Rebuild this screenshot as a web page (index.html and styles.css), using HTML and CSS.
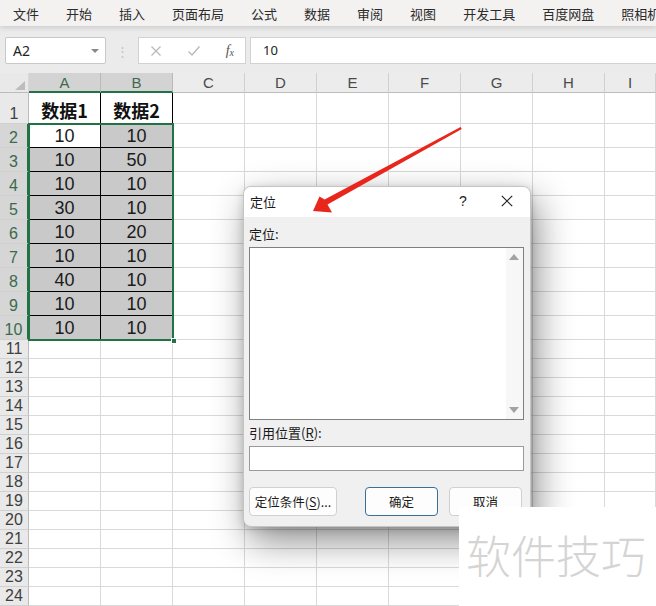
FILE: index.html
```html
<!DOCTYPE html>
<html lang="zh">
<head>
<meta charset="utf-8">
<link rel="stylesheet" href="styles.css">
</head>
<body>
<div class="menu">
  <span>文件</span><span>开始</span><span>插入</span><span>页面布局</span><span>公式</span><span>数据</span><span>审阅</span><span>视图</span><span>开发工具</span><span>百度网盘</span><span>照相机</span>
</div>
<div class="fbar">
  <div class="namebox"><span>A2</span><span class="nb-arrow"></span></div>
  <div class="dots">⋮</div>
  <div class="fxgroup">
    <svg class="ico" width="12" height="12" viewBox="0 0 12 12"><path d="M1.5 1.5L10.5 10.5M10.5 1.5L1.5 10.5" stroke="#b9b9b9" stroke-width="1.3" fill="none"/></svg>
    <svg class="ico" width="14" height="12" viewBox="0 0 14 12"><path d="M1.5 6.5L5 10L12.5 1.5" stroke="#b9b9b9" stroke-width="1.4" fill="none"/></svg>
    <span class="fx">f<sub>x</sub></span>
  </div>
  <div class="finput">10</div>
</div>
<div class="sheet">
  <div class="corner"><span class="tri"></span></div>
  <div class="ch sel">A</div><div class="ch sel">B</div><div class="ch">C</div><div class="ch">D</div><div class="ch">E</div><div class="ch">F</div><div class="ch">G</div><div class="ch">H</div><div class="ch">I</div>

  <div class="rh">1</div><div class="hd">数据1</div><div class="hd">数据2</div><div class="c"></div><div class="c"></div><div class="c"></div><div class="c"></div><div class="c"></div><div class="c"></div><div class="c"></div>

  <div class="rh sel">2</div><div class="d act">10</div><div class="d">10</div><div class="c"></div><div class="c"></div><div class="c"></div><div class="c"></div><div class="c"></div><div class="c"></div><div class="c"></div>
  <div class="rh sel">3</div><div class="d">10</div><div class="d">50</div><div class="c"></div><div class="c"></div><div class="c"></div><div class="c"></div><div class="c"></div><div class="c"></div><div class="c"></div>
  <div class="rh sel">4</div><div class="d">10</div><div class="d">10</div><div class="c"></div><div class="c"></div><div class="c"></div><div class="c"></div><div class="c"></div><div class="c"></div><div class="c"></div>
  <div class="rh sel">5</div><div class="d">30</div><div class="d">10</div><div class="c"></div><div class="c"></div><div class="c"></div><div class="c"></div><div class="c"></div><div class="c"></div><div class="c"></div>
  <div class="rh sel">6</div><div class="d">10</div><div class="d">20</div><div class="c"></div><div class="c"></div><div class="c"></div><div class="c"></div><div class="c"></div><div class="c"></div><div class="c"></div>
  <div class="rh sel">7</div><div class="d">10</div><div class="d">10</div><div class="c"></div><div class="c"></div><div class="c"></div><div class="c"></div><div class="c"></div><div class="c"></div><div class="c"></div>
  <div class="rh sel">8</div><div class="d">40</div><div class="d">10</div><div class="c"></div><div class="c"></div><div class="c"></div><div class="c"></div><div class="c"></div><div class="c"></div><div class="c"></div>
  <div class="rh sel">9</div><div class="d">10</div><div class="d">10</div><div class="c"></div><div class="c"></div><div class="c"></div><div class="c"></div><div class="c"></div><div class="c"></div><div class="c"></div>
  <div class="rh sel">10</div><div class="d">10</div><div class="d">10</div><div class="c"></div><div class="c"></div><div class="c"></div><div class="c"></div><div class="c"></div><div class="c"></div><div class="c"></div>

  <div class="rh">11</div><div class="c"></div><div class="c"></div><div class="c"></div><div class="c"></div><div class="c"></div><div class="c"></div><div class="c"></div><div class="c"></div><div class="c"></div>
  <div class="rh">12</div><div class="c"></div><div class="c"></div><div class="c"></div><div class="c"></div><div class="c"></div><div class="c"></div><div class="c"></div><div class="c"></div><div class="c"></div>
  <div class="rh">13</div><div class="c"></div><div class="c"></div><div class="c"></div><div class="c"></div><div class="c"></div><div class="c"></div><div class="c"></div><div class="c"></div><div class="c"></div>
  <div class="rh">14</div><div class="c"></div><div class="c"></div><div class="c"></div><div class="c"></div><div class="c"></div><div class="c"></div><div class="c"></div><div class="c"></div><div class="c"></div>
  <div class="rh">15</div><div class="c"></div><div class="c"></div><div class="c"></div><div class="c"></div><div class="c"></div><div class="c"></div><div class="c"></div><div class="c"></div><div class="c"></div>
  <div class="rh">16</div><div class="c"></div><div class="c"></div><div class="c"></div><div class="c"></div><div class="c"></div><div class="c"></div><div class="c"></div><div class="c"></div><div class="c"></div>
  <div class="rh">17</div><div class="c"></div><div class="c"></div><div class="c"></div><div class="c"></div><div class="c"></div><div class="c"></div><div class="c"></div><div class="c"></div><div class="c"></div>
  <div class="rh">18</div><div class="c"></div><div class="c"></div><div class="c"></div><div class="c"></div><div class="c"></div><div class="c"></div><div class="c"></div><div class="c"></div><div class="c"></div>
  <div class="rh">19</div><div class="c"></div><div class="c"></div><div class="c"></div><div class="c"></div><div class="c"></div><div class="c"></div><div class="c"></div><div class="c"></div><div class="c"></div>
  <div class="rh">20</div><div class="c"></div><div class="c"></div><div class="c"></div><div class="c"></div><div class="c"></div><div class="c"></div><div class="c"></div><div class="c"></div><div class="c"></div>
  <div class="rh">21</div><div class="c"></div><div class="c"></div><div class="c"></div><div class="c"></div><div class="c"></div><div class="c"></div><div class="c"></div><div class="c"></div><div class="c"></div>
  <div class="rh">22</div><div class="c"></div><div class="c"></div><div class="c"></div><div class="c"></div><div class="c"></div><div class="c"></div><div class="c"></div><div class="c"></div><div class="c"></div>
  <div class="rh">23</div><div class="c"></div><div class="c"></div><div class="c"></div><div class="c"></div><div class="c"></div><div class="c"></div><div class="c"></div><div class="c"></div><div class="c"></div>
  <div class="rh">24</div><div class="c"></div><div class="c"></div><div class="c"></div><div class="c"></div><div class="c"></div><div class="c"></div><div class="c"></div><div class="c"></div><div class="c"></div>

  <div class="selection"><span class="handle"></span></div>
</div>

<div class="dialog">
  <div class="dtitle">
    <span class="dt-text">定位</span>
    <span class="dt-help">?</span>
    <svg class="dt-close" width="12" height="12" viewBox="0 0 12 12"><path d="M0.8 0.8L11.2 11.2M11.2 0.8L0.8 11.2" stroke="#222" stroke-width="1.2" fill="none"/></svg>
  </div>
  <div class="dbody">
    <div class="dlabel">定位:</div>
    <div class="listbox">
      <div class="lb-area"></div>
      <div class="lb-scroll"><span class="up"></span><span class="down"></span></div>
    </div>
    <div class="dlabel">引用位置(<u>R</u>):</div>
    <div class="dinput"></div>
    <div class="dbtns">
      <div class="btn wide">定位条件(<u>S</u>)...</div>
      <div class="btn primary">确定</div>
      <div class="btn">取消</div>
    </div>
  </div>
</div>

<svg class="arrow" width="656" height="606" viewBox="0 0 656 606">
  <polygon points="313,211 332,212.5 327.5,204.5 461.8,129 460.6,127 324.6,199.6 319.5,196.5" fill="#e8261c"/>
</svg>

<div class="watermark">软件技巧</div>
</body>
</html>
```

FILE: styles.css
```css
* { box-sizing: border-box; }
html, body { margin: 0; padding: 0; }
body {
  width: 656px;
  height: 606px;
  overflow: hidden;
  position: relative;
  background: #ffffff;
  font-family: "Noto Sans CJK SC", "Noto Sans", sans-serif;
  color: #222;
}

/* menu */
.menu {
  height: 26px;
  background: #f3f2f1;
  display: flex;
  align-items: center;
  gap: 27px;
  padding-left: 13px;
  font-size: 13px;
  color: #2b2b2b;
  white-space: nowrap;
  overflow: hidden;
  position: relative;
  z-index: 1;
  box-shadow: 0 2px 5px rgba(0, 0, 0, 0.13);
}

/* formula bar */
.fbar {
  height: 47px;
  background: #ebebeb;
  display: flex;
  align-items: flex-start;
  padding-top: 11px;
  padding-left: 5px;
}
.namebox {
  width: 101px;
  height: 27px;
  background: #fff;
  border: 1px solid #c9c9c9;
  border-radius: 2px;
  display: flex;
  align-items: center;
  justify-content: space-between;
  padding: 0 6px 0 7px;
  font-family: "Noto Sans", sans-serif;
  font-size: 14px;
  color: #222;
}
.nb-arrow {
  width: 0;
  height: 0;
  border-left: 4px solid transparent;
  border-right: 4px solid transparent;
  border-top: 4px solid #8a8a8a;
}
.dots {
  width: 32px;
  text-align: center;
  color: #c4c4c4;
  font-size: 13px;
  line-height: 27px;
}
.fxgroup {
  width: 108px;
  height: 27px;
  background: #fff;
  border: 1px solid #d2d2d2;
  display: flex;
  align-items: center;
  justify-content: space-between;
  padding: 0 11px 0 11px;
}
.fx {
  font-family: "Liberation Serif", serif;
  font-style: italic;
  font-size: 14px;
  color: #555;
}
.fx sub { font-size: 10px; vertical-align: -1px; }
.finput {
  flex: 1;
  margin-left: 4px;
  height: 27px;
  background: #fff;
  border: 1px solid #d2d2d2;
  border-right: none;
  padding-left: 12px;
  font-family: "Noto Sans", sans-serif;
  font-size: 13px;
  line-height: 25px;
  color: #222;
}

/* sheet */
.sheet {
  position: relative;
  display: grid;
  grid-template-columns: 29px repeat(8, 72px) 51px;
  grid-template-rows: 20px 31px repeat(9, 24px) repeat(14, 19px);
}
.sheet > div { border-right: 1px solid #d9d9d9; border-bottom: 1px solid #d9d9d9; }
.corner {
  background: #e9e9e9;
  border-bottom: 1px solid #bcbcbc !important;
  position: relative;
}
.tri {
  position: absolute;
  right: 3px;
  bottom: 2px;
  width: 0;
  height: 0;
  border-left: 10px solid transparent;
  border-bottom: 9px solid #bdbdbd;
}
.ch {
  background: #ececec;
  border-bottom: 1px solid #bcbcbc !important;
  border-right: 1px solid #d0d0d0 !important;
  text-align: center;
  font-family: "Liberation Sans", sans-serif;
  font-size: 15px;
  line-height: 19px;
  color: #4a4a4a;
}
.ch.sel {
  background: #d3d3d3;
  color: #3f6a50;
  border-bottom: 2px solid #217346 !important;
  border-right: 1px solid #b9b9b9 !important;
}
.rh {
  background: #e9e9e9;
  border-right: 1px solid #bcbcbc !important;
  border-bottom: 1px solid #d0d0d0 !important;
  display: flex;
  align-items: flex-end;
  justify-content: center;
  font-family: "Liberation Sans", sans-serif;
  font-size: 16px;
  line-height: 18px;
  color: #404040;
}
.rh.sel {
  background: #d6d6d6;
  color: #3a6a4e;
  border-right: 2px solid #217346 !important;
}
.hd, .d {
  border-right: 1px solid #000 !important;
  border-bottom: 1px solid #000 !important;
  display: flex;
  align-items: flex-end;
  justify-content: center;
}
.hd {
  font-family: "Noto Sans CJK SC", sans-serif;
  font-weight: 700;
  font-size: 18px;
  line-height: 26px;
  color: #111;
}
.d {
  background: #c9c9c9;
  font-family: "Liberation Sans", sans-serif;
  font-size: 18px;
  line-height: 21px;
  color: #1a1a1a;
}
.d.act { background: #ffffff; }
.selection {
  position: absolute;
  left: 28px;
  top: 50px;
  width: 146px;
  height: 218px;
  border: 2px solid #217346 !important;
  pointer-events: none;
}
.handle {
  position: absolute;
  right: -5px;
  bottom: -5px;
  width: 6px;
  height: 6px;
  background: #217346;
  border: 1px solid #fff;
}

/* dialog */
.dialog {
  position: absolute;
  left: 243px;
  top: 186px;
  width: 288px;
  height: 341px;
  background: #f0f0f0;
  border: 1px solid #c4c4c4;
  border-radius: 8px;
  overflow: hidden;
  box-shadow: 6px 14px 36px rgba(0, 0, 0, 0.45), 0 2px 8px rgba(0, 0, 0, 0.15);
  font-size: 13px;
  color: #1a1a1a;
}
.dtitle {
  height: 30px;
  background: #ffffff;
  display: flex;
  align-items: center;
  padding-left: 6px;
  padding-bottom: 2px;
}
.dt-text { flex: 1; }
.dt-help {
  font-family: "Liberation Sans", sans-serif;
  font-size: 14px;
  width: 30px;
  margin-right: 12px;
}
.dt-close { margin-right: 17px; }
.dbody {
  padding: 7px 6px 0 5px;
  display: flex;
  flex-direction: column;
}
.dlabel { height: 20px; line-height: 20px; }
.dlabel u { text-underline-offset: 2px; }
.listbox {
  margin-top: 3px;
  height: 173px;
  width: 275px;
  border: 1px solid #7f7f7f;
  background: #fff;
  display: flex;
  margin-bottom: 3px;
}
.lb-area { flex: 1; }
.lb-scroll {
  width: 17px;
  background: #f7f7f7;
  position: relative;
}
.up, .down {
  position: absolute;
  left: 3px;
  width: 0;
  height: 0;
  border-left: 5px solid transparent;
  border-right: 5px solid transparent;
}
.up { top: 6px; border-bottom: 6px solid #a3a3a3; }
.down { bottom: 6px; border-top: 6px solid #a3a3a3; }
.dinput {
  margin-top: 3px;
  width: 275px;
  height: 25px;
  background: #fff;
  border: 1px solid #9a9a9a;
}
.dbtns {
  margin-top: 16px;
  display: flex;
  gap: 0;
}
.btn {
  height: 29px;
  width: 73px;
  background: #fdfdfd;
  border: 1px solid #d0d0d0;
  border-radius: 4px;
  display: flex;
  align-items: center;
  justify-content: center;
  font-size: 12.5px;
}
.btn.wide { width: 88px; }
.btn.primary { margin-left: 28px; margin-right: 11px; border-color: #3d6f96; }
.btn u { text-underline-offset: 2px; }

/* overlays */
.arrow {
  position: absolute;
  left: 0;
  top: 0;
  pointer-events: none;
}
.watermark {
  position: absolute;
  left: 459px;
  top: 507px;
  width: 197px;
  height: 99px;
  background: #ffffff;
  color: #d4d4d4;
  font-size: 45px;
  font-weight: 300;
  line-height: 1;
  padding: 25px 0 0 7px;
  white-space: nowrap;
}
```
